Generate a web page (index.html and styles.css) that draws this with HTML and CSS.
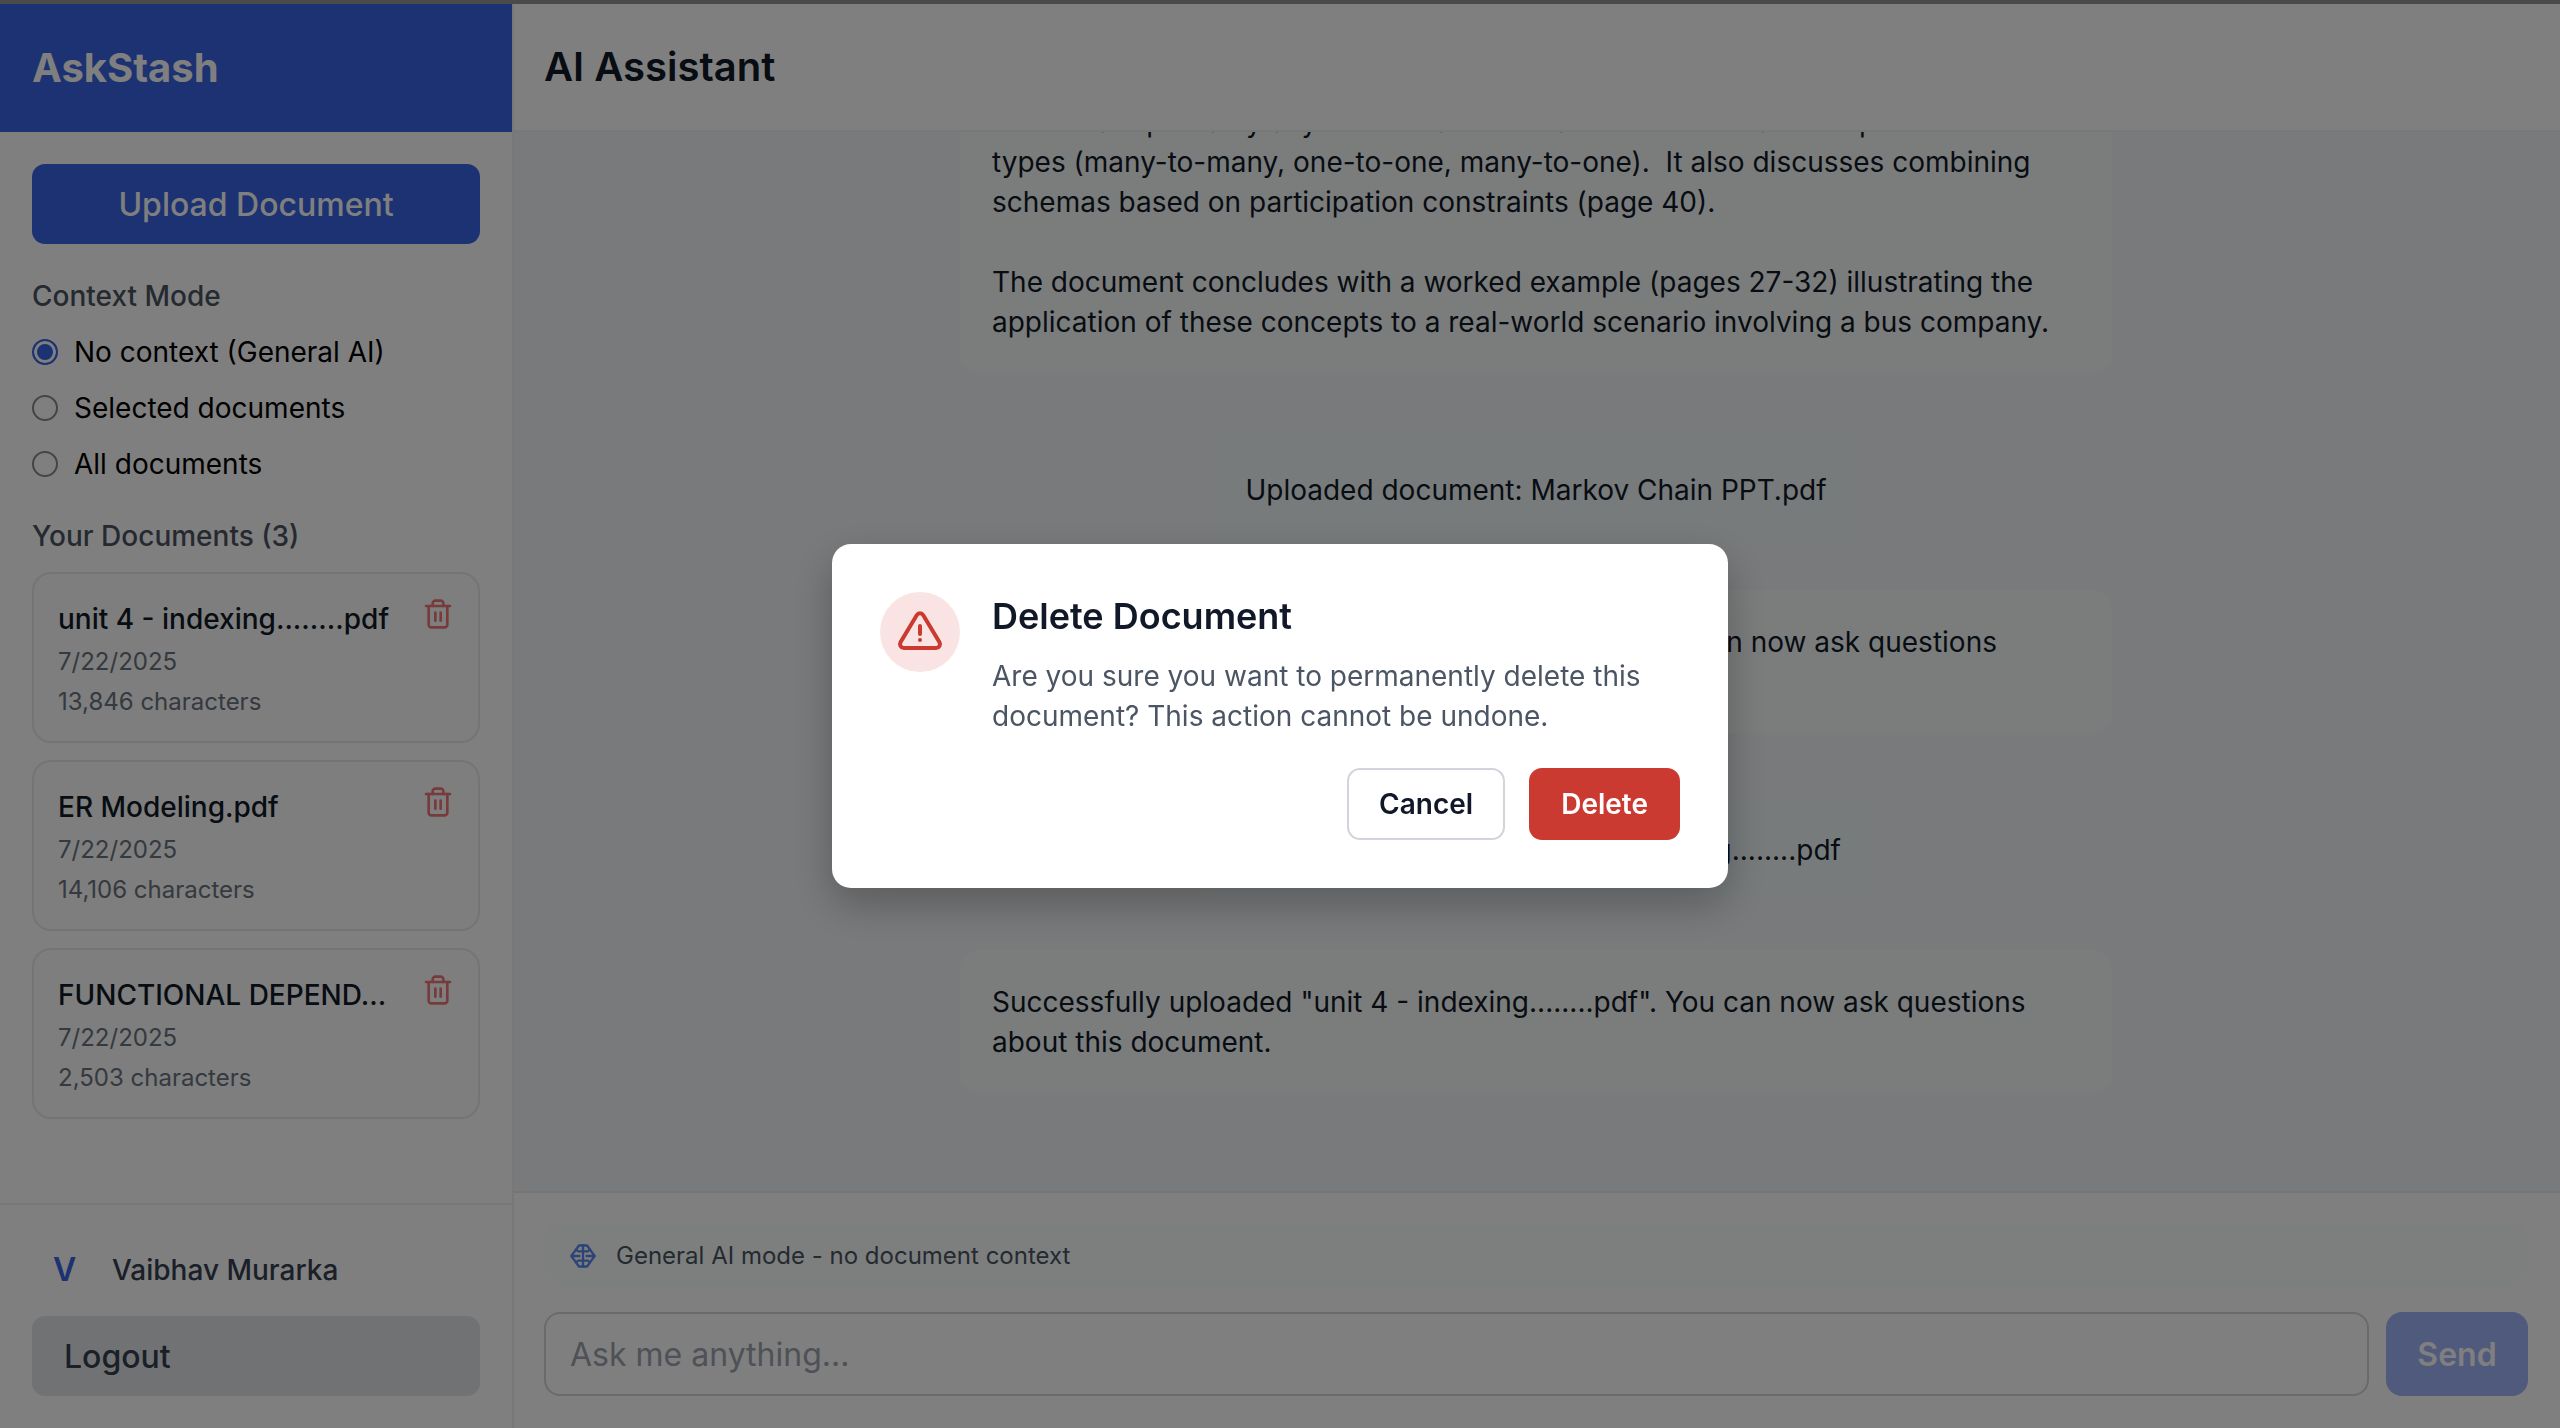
FILE: index.html
```html
<!DOCTYPE html>
<html lang="en">
<head>
  <meta charset="UTF-8">
  <meta name="viewport" content="width=device-width, initial-scale=1.0">
  <title>AskStash</title>
  <link rel="stylesheet" href="styles.css">
</head>
<body>
  <div class="top-strip"></div>
  <div class="app">
    <aside class="sidebar">
      <div class="brand">AskStash</div>
      <div class="side-body">
        <button class="upload-btn">Upload Document</button>
        <div class="side-label context-label">Context Mode</div>
        <label class="radio-row"><input type="radio" name="mode" checked>No context (General AI)</label>
        <label class="radio-row"><input type="radio" name="mode">Selected documents</label>
        <label class="radio-row"><input type="radio" name="mode">All documents</label>
        <div class="side-label docs-label">Your Documents (3)</div>
        <div class="doc-list">
          <div class="doc-card">
            <div class="doc-info">
              <div class="doc-name">unit 4 - indexing........pdf</div>
              <div class="doc-meta">7/22/2025</div>
              <div class="doc-meta">13,846 characters</div>
            </div>
            <svg class="trash" viewBox="0 0 24 24"><path d="M3 6h18"/><path d="M19 6v14c0 1-1 2-2 2H7c-1 0-2-1-2-2V6"/><path d="M8 6V4c0-1 1-2 2-2h4c1 0 2 1 2 2v2"/><path d="M10 11v6"/><path d="M14 11v6"/></svg>
          </div>
          <div class="doc-card">
            <div class="doc-info">
              <div class="doc-name">ER Modeling.pdf</div>
              <div class="doc-meta">7/22/2025</div>
              <div class="doc-meta">14,106 characters</div>
            </div>
            <svg class="trash" viewBox="0 0 24 24"><path d="M3 6h18"/><path d="M19 6v14c0 1-1 2-2 2H7c-1 0-2-1-2-2V6"/><path d="M8 6V4c0-1 1-2 2-2h4c1 0 2 1 2 2v2"/><path d="M10 11v6"/><path d="M14 11v6"/></svg>
          </div>
          <div class="doc-card">
            <div class="doc-info">
              <div class="doc-name">FUNCTIONAL DEPEND...</div>
              <div class="doc-meta">7/22/2025</div>
              <div class="doc-meta">2,503 characters</div>
            </div>
            <svg class="trash" viewBox="0 0 24 24"><path d="M3 6h18"/><path d="M19 6v14c0 1-1 2-2 2H7c-1 0-2-1-2-2V6"/><path d="M8 6V4c0-1 1-2 2-2h4c1 0 2 1 2 2v2"/><path d="M10 11v6"/><path d="M14 11v6"/></svg>
          </div>
        </div>
      </div>
      <div class="side-footer">
        <div class="user-row"><span class="avatar">V</span><span class="user-name">Vaibhav Murarka</span></div>
        <button class="logout-btn">Logout</button>
      </div>
    </aside>

    <main class="main">
      <header class="main-header">AI Assistant</header>
      <section class="chat">
        <div class="bubble">
          <p>Entities are primarily any of the main roles and the four relationship</p>
          <p>types (many-to-many, one-to-one, many-to-one).&nbsp; It also discusses combining<br>schemas based on participation constraints (page 40).</p>
          <p class="para">The document concludes with a worked example (pages 27-32) illustrating the<br>application of these concepts to a real-world scenario involving a bus company.</p>
        </div>
        <div class="bubble user">Uploaded document: Markov Chain PPT.pdf</div>
        <div class="bubble">Successfully uploaded "Markov Chain PPT.pdf". You can now ask questions<br>about this document.</div>
        <div class="bubble user">Uploaded document: unit 4 - indexing........pdf</div>
        <div class="bubble">Successfully uploaded "unit 4 - indexing........pdf". You can now ask questions<br>about this document.</div>
      </section>
      <footer class="composer">
        <div class="mode-bar">
          <svg class="brain" viewBox="0 0 24 24"><path d="M12 3v18"/><path d="M12 3H8.500L6 6.500 2 12l4 5.500L8.500 21H12"/><path d="M12 3h3.500L18 6.500 22 12l-4 5.500L15.500 21H12"/><path d="M12 8H8L6 6.500"/><path d="M12 8h4l2-1.500"/><path d="M12 16H8l-2 1.500"/><path d="M12 16h4l2 1.500"/><path d="M2.500 12H9"/><path d="M21.500 12H15"/></svg>
          General AI mode - no document context
        </div>
        <div class="input-row">
          <input class="ask-input" type="text" placeholder="Ask me anything...">
          <button class="send-btn">Send</button>
        </div>
      </footer>
    </main>
  </div>

  <div class="overlay">
    <div class="modal">
      <div class="modal-top">
        <div class="warn-circle">
          <svg class="warn" viewBox="0 0 24 24"><path d="M12 9v4"/><path d="M10.363 3.591l-8.106 13.534a1.914 1.914 0 0 0 1.636 2.871h16.214a1.914 1.914 0 0 0 1.636 -2.87l-8.106 -13.536a1.914 1.914 0 0 0 -3.274 0z"/><path d="M12 16h.01"/></svg>
        </div>
        <div class="modal-text">
          <h2>Delete Document</h2>
          <p>Are you sure you want to permanently delete this<br>document? This action cannot be undone.</p>
        </div>
      </div>
      <div class="modal-actions">
        <button class="cancel-btn">Cancel</button>
        <button class="delete-btn">Delete</button>
      </div>
    </div>
  </div>
</body>
</html>
```

FILE: styles.css
```css
* {
  box-sizing: border-box;
  margin: 0;
  padding: 0;
  font-family: Inter, "Noto Sans", sans-serif;
}

html, body {
  height: 100%;
  overflow: hidden;
}

body {
  background: #fff;
  color: #111827;
}

button {
  border: none;
  cursor: pointer;
}

svg {
  fill: none;
  stroke: currentColor;
  stroke-width: 2;
  stroke-linecap: round;
  stroke-linejoin: round;
  flex-shrink: 0;
}

.top-strip {
  position: relative;
  z-index: 20;
  height: 4px;
  background: #4a4a4a;
}

.app {
  display: flex;
  height: 1424px;
}

/* sidebar */
.sidebar {
  width: 514px;
  display: flex;
  flex-direction: column;
  flex-shrink: 0;
  background: #fff;
  border-right: 2px solid #f0f0f2;
}

.brand {
  height: 128px;
  padding-left: 32px;
  line-height: 127px;
  font-size: 40px;
  font-weight: 700;
  color: #fff;
  background: #3864e4;
}

.side-body {
  flex: 1;
  padding: 32px 32px 0;
}

.upload-btn {
  width: 100%;
  height: 80px;
  border-radius: 13px;
  background: #3864e4;
  color: #fff;
  font-size: 32px;
  font-weight: 500;
}

.side-label {
  font-size: 28px;
  font-weight: 500;
  color: #4b5563;
  line-height: 40px;
}

.context-label {
  margin-top: 32px;
  margin-bottom: 8px;
}

.docs-label {
  margin-top: 24px;
  margin-bottom: 16px;
}

.radio-row {
  display: flex;
  align-items: center;
  gap: 16px;
  height: 56px;
  font-size: 28px;
  color: #000;
}

.radio-row input {
  appearance: none;
  width: 26px;
  height: 26px;
  border: 2px solid #8a8a8a;
  border-radius: 50%;
  background: #fff;
  flex-shrink: 0;
}

.radio-row input:checked {
  border-color: #3864e4;
  background: #3864e4;
  box-shadow: inset 0 0 0 3px #fff;
}

.doc-list {
  display: flex;
  flex-direction: column;
  gap: 17px;
}

.doc-card {
  display: flex;
  justify-content: space-between;
  height: 171px;
  padding: 25px 24px 0;
  border: 2px solid #e5e9ec;
  border-radius: 19px;
  background: #fafdfb;
}

.doc-name {
  font-size: 28px;
  font-weight: 500;
  line-height: 40px;
  color: #111827;
}

.doc-meta {
  font-size: 24px;
  line-height: 40px;
  color: #6b7280;
}

.doc-info .doc-meta:nth-child(2) {
  margin-top: 3px;
}

.trash {
  width: 32px;
  height: 32px;
  margin-top: -1px;
  color: #ee7676;
}

.side-footer {
  height: 225px;
  padding: 0 32px;
  border-top: 2px solid #eceef0;
}

.user-row {
  display: flex;
  align-items: center;
  height: 111px;
  padding: 18px 0 0 21px;
}

.avatar {
  width: 59px;
  font-size: 32px;
  font-weight: 600;
  color: #3864e4;
}

.user-name {
  font-size: 28px;
  font-weight: 500;
  color: #374151;
}

.logout-btn {
  display: block;
  width: 100%;
  height: 80px;
  padding-left: 32px;
  border-radius: 13px;
  background: #e2e5e8;
  color: #374151;
  font-size: 32px;
  font-weight: 500;
  text-align: left;
}

/* main area */
.main {
  flex: 1;
  display: flex;
  flex-direction: column;
  min-width: 0;
  background: #fff;
}

.main-header {
  height: 128px;
  padding-left: 30px;
  line-height: 126px;
  font-size: 40px;
  font-weight: 600;
  color: #111827;
  border-bottom: 2px solid #f0f0f0;
  position: relative;
  z-index: 1;
  background: #fff;
}

.chat {
  height: 1059px;
  display: flex;
  flex-direction: column;
  justify-content: flex-end;
  align-items: center;
  gap: 50px;
  padding: 0 2px 98px 0;
  overflow: hidden;
  background: #f2f4f6;
}

.bubble {
  flex-shrink: 0;
  width: 1152px;
  padding: 32px 32px 31px;
  border-radius: 19px;
  background: #f7fbfa;
  font-size: 28px;
  line-height: 40px;
  color: #111827;
}

.bubble.user {
  width: auto;
  margin-top: 14px;
  padding: 33px 32px 30px;
  background: #f0f6f8;
}

.para {
  margin-top: 40px;
}

.composer {
  flex: 1;
  padding: 31px 32px 0 30px;
  border-top: 2px solid #ebebeb;
}

.mode-bar {
  display: flex;
  align-items: center;
  gap: 19px;
  height: 63px;
  padding: 0 25px;
  border-radius: 16px;
  background: #fafefc;
  font-size: 24px;
  color: #4b5563;
}

.brain {
  width: 28px;
  height: 28px;
  color: #5c88f0;
}

.input-row {
  display: flex;
  gap: 17px;
  margin-top: 25px;
}

.ask-input {
  flex: 1;
  height: 84px;
  padding: 0 24px;
  border: 2px solid #d1d5db;
  border-radius: 16px;
  background: #fff;
  font-size: 32px;
  outline: none;
}

.ask-input::placeholder {
  color: #9ca3af;
}

.send-btn {
  width: 142px;
  height: 84px;
  border-radius: 16px;
  background: #9eb4f8;
  color: #fff;
  font-size: 32px;
  font-weight: 600;
}

/* delete dialog */
.overlay {
  position: fixed;
  inset: 0;
  z-index: 10;
  display: flex;
  align-items: center;
  justify-content: center;
  padding-top: 4px;
  background: rgba(0, 0, 0, 0.5);
}

.modal {
  width: 896px;
  height: 344px;
  padding: 48px;
  border-radius: 19px;
  background: #fff;
  box-shadow: 0 16px 40px rgba(0, 0, 0, 0.25);
}

.modal-top {
  display: flex;
  gap: 32px;
}

.warn-circle {
  display: flex;
  align-items: center;
  justify-content: center;
  width: 80px;
  height: 80px;
  border-radius: 50%;
  background: #f9e3e3;
  flex-shrink: 0;
}

.warn {
  width: 48px;
  height: 48px;
  color: #cb3a31;
}

.modal-text h2 {
  font-size: 36px;
  font-weight: 600;
  line-height: 48px;
  color: #111827;
}

.modal-text p {
  margin-top: 16px;
  font-size: 28px;
  line-height: 40px;
  color: #4b5563;
}

.modal-actions {
  display: flex;
  justify-content: flex-end;
  gap: 24px;
  margin-top: 32px;
}

.cancel-btn,
.delete-btn {
  height: 72px;
  padding: 0 32px;
  border-radius: 13px;
  font-size: 28px;
  font-weight: 600;
}

.cancel-btn {
  padding: 0 30px;
  border: 2px solid #d1d5db;
  background: #fff;
  color: #111827;
}

.delete-btn {
  background: #cb3a31;
  color: #fff;
}
```
